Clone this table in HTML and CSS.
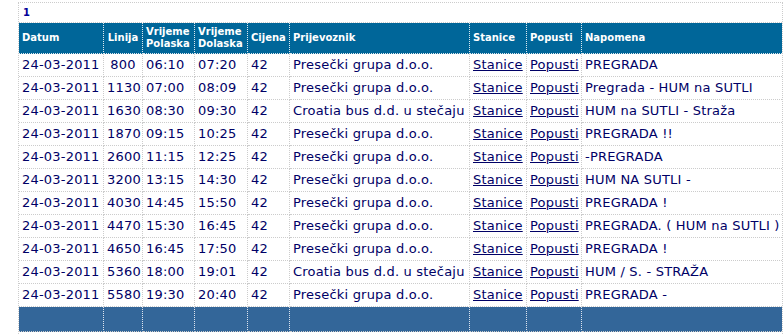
FILE: index.html
```html
<!DOCTYPE html>
<html lang="hr">
<head>
<meta charset="utf-8">
<title>Vozni red</title>
<link rel="stylesheet" href="styles.css">
</head>
<body>
<div class="frame">
  <table class="grid">
    <colgroup>
      <col class="c-datum"><col class="c-linija"><col class="c-pol"><col class="c-dol"><col class="c-cij"><col class="c-prij"><col class="c-stan"><col class="c-pop"><col class="c-nap">
    </colgroup>
    <thead>
      <tr class="pager"><td colspan="9"><span class="page">1</span></td></tr>
      <tr class="head">
        <th>Datum</th><th class="center">Linija</th><th>Vrijeme Polaska</th><th>Vrijeme Dolaska</th><th>Cijena</th><th>Prijevoznik</th><th>Stanice</th><th>Popusti</th><th class="last">Napomena</th>
      </tr>
    </thead>
    <tbody>
      <tr><td>24-03-2011</td><td class="center">800</td><td>06:10</td><td>07:20</td><td>42</td><td>Presečki grupa d.o.o.</td><td><a href="#">Stanice</a></td><td><a href="#">Popusti</a></td><td class="last">PREGRADA</td></tr>
      <tr><td>24-03-2011</td><td class="center">1130</td><td>07:00</td><td>08:09</td><td>42</td><td>Presečki grupa d.o.o.</td><td><a href="#">Stanice</a></td><td><a href="#">Popusti</a></td><td class="last">Pregrada - HUM na SUTLI</td></tr>
      <tr><td>24-03-2011</td><td class="center">1630</td><td>08:30</td><td>09:30</td><td>42</td><td>Croatia bus d.d. u stečaju</td><td><a href="#">Stanice</a></td><td><a href="#">Popusti</a></td><td class="last">HUM na SUTLI - Straža</td></tr>
      <tr><td>24-03-2011</td><td class="center">1870</td><td>09:15</td><td>10:25</td><td>42</td><td>Presečki grupa d.o.o.</td><td><a href="#">Stanice</a></td><td><a href="#">Popusti</a></td><td class="last">PREGRADA !!</td></tr>
      <tr><td>24-03-2011</td><td class="center">2600</td><td>11:15</td><td>12:25</td><td>42</td><td>Presečki grupa d.o.o.</td><td><a href="#">Stanice</a></td><td><a href="#">Popusti</a></td><td class="last">-PREGRADA</td></tr>
      <tr><td>24-03-2011</td><td class="center">3200</td><td>13:15</td><td>14:30</td><td>42</td><td>Presečki grupa d.o.o.</td><td><a href="#">Stanice</a></td><td><a href="#">Popusti</a></td><td class="last">HUM NA SUTLI -</td></tr>
      <tr><td>24-03-2011</td><td class="center">4030</td><td>14:45</td><td>15:50</td><td>42</td><td>Presečki grupa d.o.o.</td><td><a href="#">Stanice</a></td><td><a href="#">Popusti</a></td><td class="last">PREGRADA !</td></tr>
      <tr><td>24-03-2011</td><td class="center">4470</td><td>15:30</td><td>16:45</td><td>42</td><td>Presečki grupa d.o.o.</td><td><a href="#">Stanice</a></td><td><a href="#">Popusti</a></td><td class="last">PREGRADA. ( HUM na SUTLI )</td></tr>
      <tr><td>24-03-2011</td><td class="center">4650</td><td>16:45</td><td>17:50</td><td>42</td><td>Presečki grupa d.o.o.</td><td><a href="#">Stanice</a></td><td><a href="#">Popusti</a></td><td class="last">PREGRADA !</td></tr>
      <tr><td>24-03-2011</td><td class="center">5360</td><td>18:00</td><td>19:01</td><td>42</td><td>Croatia bus d.d. u stečaju</td><td><a href="#">Stanice</a></td><td><a href="#">Popusti</a></td><td class="last">HUM / S. - STRAŽA</td></tr>
      <tr><td>24-03-2011</td><td class="center">5580</td><td>19:30</td><td>20:40</td><td>42</td><td>Presečki grupa d.o.o.</td><td><a href="#">Stanice</a></td><td><a href="#">Popusti</a></td><td class="last">PREGRADA -</td></tr>
    </tbody>
    <tfoot>
      <tr class="foot"><td>&nbsp;</td><td>&nbsp;</td><td>&nbsp;</td><td>&nbsp;</td><td>&nbsp;</td><td>&nbsp;</td><td>&nbsp;</td><td>&nbsp;</td><td class="last">&nbsp;</td></tr>
    </tfoot>
  </table>
</div>
</body>
</html>
```
FILE: styles.css
```css
html, body {
  margin: 0;
  padding: 0;
  overflow: hidden;
  background: #ffffff;
}

body {
  font-family: "DejaVu Sans", Verdana, sans-serif;
  font-size: 13px;
  color: #000066;
}

.frame {
  margin: 2px 0 0 18px;
  width: 765px;
  box-sizing: border-box;
  border: 1px dotted #cccccc;
  border-bottom: none;
  padding-bottom: 20px;
}

.grid {
  width: 763px;
  table-layout: fixed;
  border-collapse: separate;
  border-spacing: 0;
}

.c-datum { width: 85px; }
.c-linija { width: 39px; }
.c-pol { width: 52px; }
.c-dol { width: 53px; }
.c-cij { width: 42px; }
.c-prij { width: 180px; }
.c-stan { width: 57px; }
.c-pop { width: 55px; }
.c-nap { width: 200px; }

.grid td,
.grid th {
  box-sizing: border-box;
  padding: 3px 3px;
  line-height: 16px;
  text-align: left;
  vertical-align: middle;
  white-space: nowrap;
  overflow: hidden;
  border-right: 1px dotted #cccccc;
  border-bottom: 1px dotted #cccccc;
}

.grid tbody td {
  letter-spacing: 0.2px;
}

.grid .last {
  border-right: none;
}

.grid .center {
  text-align: center;
}

.pager td {
  border-right: none;
  line-height: 12px;
  padding: 3px 4px;
}

.page {
  font-size: 10px;
  font-weight: bold;
  color: #000099;
}

.head th {
  background: #006699;
  color: #ffffff;
  font-size: 10px;
  font-weight: bold;
  line-height: 12px;
  white-space: normal;
  padding: 3px 3px;
  border-right-color: #dde8ee;
  border-bottom-color: #dde8ee;
}

.grid a {
  color: #000066;
  text-decoration: underline;
}

.foot td {
  background: #336699;
  padding: 4px 3px;
  line-height: 16px;
  border-right-color: #dde3ee;
}
```
